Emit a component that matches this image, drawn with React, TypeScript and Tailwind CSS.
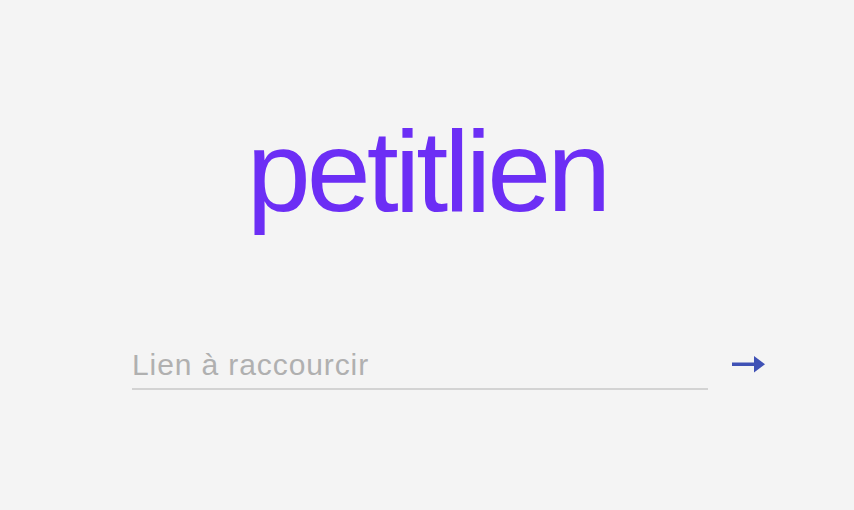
export default function App() {
    return (
        <div className="min-h-screen bg-[#f4f4f4] flex flex-col font-['Liberation_Sans',Arial,sans-serif]">
            <h1 className="mt-[114px] text-center text-[115px] leading-none tracking-[-4px] text-[#6c2ef5]">
                petitlien
            </h1>

            <form className="mt-[118px] ml-[132px] flex items-center gap-[24px]" onSubmit={e => e.preventDefault()}>
                <input
                    placeholder="Lien à raccourcir"
                    className="w-[576px] bg-transparent border-b-2 border-[#d3d3d3] pb-[5px] text-[30px] leading-[36px] tracking-[0.9px] text-[#333] placeholder:text-[#b0b0b0] focus:outline-none"
                />
                <button type="submit" className="mt-[-10px]">
                    <svg width="34" height="18" viewBox="0 0 34 18">
                        <rect x="0" y="7.5" width="24" height="3.5" fill="#3f51b5" />
                        <polygon points="22,1 33,9.25 22,17.5" fill="#3f51b5" />
                    </svg>
                </button>
            </form>
        </div>
    );
}
